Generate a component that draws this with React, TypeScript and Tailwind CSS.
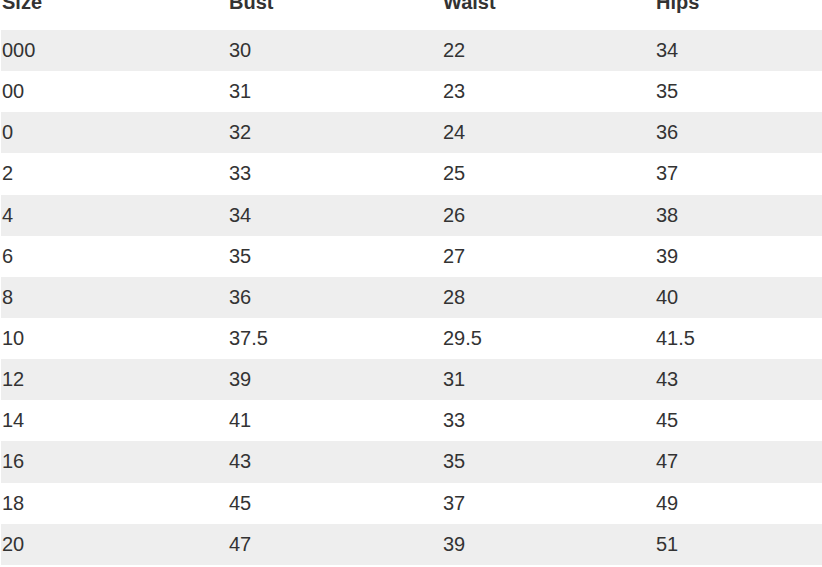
const rows: [string, string, string, string][] = [
  ["000", "30", "22", "34"],
  ["00", "31", "23", "35"],
  ["0", "32", "24", "36"],
  ["2", "33", "25", "37"],
  ["4", "34", "26", "38"],
  ["6", "35", "27", "39"],
  ["8", "36", "28", "40"],
  ["10", "37.5", "29.5", "41.5"],
  ["12", "39", "31", "43"],
  ["14", "41", "33", "45"],
  ["16", "43", "35", "47"],
  ["18", "45", "37", "49"],
  ["20", "47", "39", "51"],
];

export default function App() {
  return (
    <div className="h-[567px] overflow-hidden bg-white pl-px font-['Liberation_Sans',Arial,sans-serif] text-[20px] text-[#333333]">
      <table className="-mt-[9px] w-[821px] table-fixed border-collapse">
        <colgroup>
          <col className="w-[227px]" />
          <col className="w-[214px]" />
          <col className="w-[213px]" />
          <col />
        </colgroup>
        <thead>
          <tr>
            {["Size", "Bust", "Waist", "Hips"].map((h) => (
              <th key={h} className="h-[39px] p-0 pb-[16px] pl-px text-left align-top font-bold leading-[23px]">
                {h}
              </th>
            ))}
          </tr>
        </thead>
        <tbody>
          {rows.map((r, i) => (
            <tr key={r[0]} className={i % 2 === 0 ? "bg-[#eeeeee]" : "bg-white"}>
              {r.map((c, j) => (
                <td key={j} className="h-[41.15px] p-0 pl-px align-middle leading-[23px]">
                  {c}
                </td>
              ))}
            </tr>
          ))}
        </tbody>
      </table>
    </div>
  );
}
